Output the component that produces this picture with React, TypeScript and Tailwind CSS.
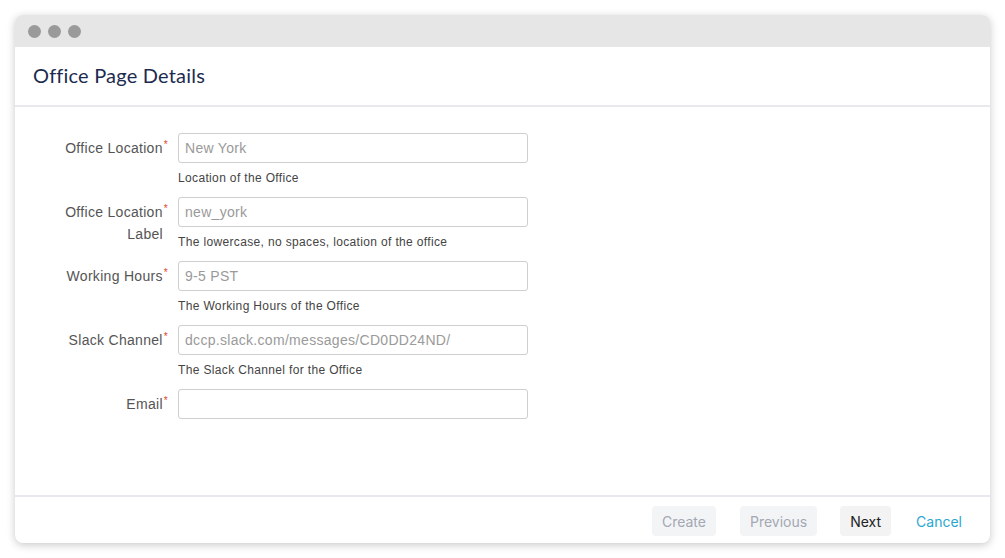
import React from 'react';

type Field = {
  label: string[];
  placeholder: string;
  help?: string;
};

const fields: Field[] = [
  { label: ['Office Location'], placeholder: 'New York', help: 'Location of the Office' },
  { label: ['Office Location', 'Label'], placeholder: 'new_york', help: 'The lowercase, no spaces, location of the office' },
  { label: ['Working Hours'], placeholder: '9-5 PST', help: 'The Working Hours of the Office' },
  { label: ['Slack Channel'], placeholder: 'dccp.slack.com/messages/CD0DD24ND/', help: 'The Slack Channel for the Office' },
  { label: ['Email'], placeholder: '' },
];

function FormRow({ field }: { field: Field }) {
  return (
    <div className="flex h-[64px]">
      <div className="w-[153px] shrink-0 pt-[5px] text-right text-[14px] leading-[20px] tracking-[0.3px] text-[#555]">
        {field.label.map((line, i) => (
          <div key={i} className={i > 0 ? 'pr-[5px]' : ''}>
            {line}
            {i === 0 && <span className="relative -top-[5px] ml-[1px] text-[10px] text-[#e0452b]">*</span>}
          </div>
        ))}
      </div>
      <div className="ml-[10px] flex flex-col">
        <input
          type="text"
          placeholder={field.placeholder}
          className="h-[30px] w-[350px] rounded-[3px] border border-[#cfcfcf] bg-white px-[6px] text-[14px] tracking-[0.3px] text-[#333] placeholder-[#9a9a9a] outline-none"
        />
        {field.help && (
          <span className="mt-[7px] text-[12px] leading-[16px] tracking-[0.35px] text-[#444]">{field.help}</span>
        )}
      </div>
    </div>
  );
}

export default function App() {
  return (
    <div className="h-[558px] w-full bg-white p-[15px] font-['Liberation_Sans',Arial,sans-serif]">
      <div className="flex h-full flex-col overflow-hidden rounded-[8px] bg-white shadow-[0_2px_8px_rgba(0,0,0,0.22)]">
        {/* window chrome */}
        <div className="flex h-[32px] shrink-0 items-center gap-[7px] bg-[#e6e6e6] pl-[13px]">
          <span className="h-[13px] w-[13px] rounded-full bg-[#9a9a9a]" />
          <span className="h-[13px] w-[13px] rounded-full bg-[#9a9a9a]" />
          <span className="h-[13px] w-[13px] rounded-full bg-[#9a9a9a]" />
        </div>

        <div className="flex h-[60px] shrink-0 items-center border-b-2 border-[#e8e8ee] pb-[3px] pl-[18px]">
          <h1 className="font-['Lato',sans-serif] text-[20px] font-normal tracking-[0.2px] text-[#1c2b4f]">Office Page Details</h1>
        </div>

        <div className="flex-1 pt-[26px]">
          {fields.map((f, i) => (
            <FormRow key={i} field={f} />
          ))}
        </div>

        <div className="flex h-[48px] shrink-0 items-center justify-end border-t-2 border-[#e8e8ee] pr-[28px] pt-[2px] font-['Inter',sans-serif] text-[14px]">
          <button className="h-[30px] rounded-[4px] bg-[#f3f4f6] px-[10px] text-[#a3a8b3]">Create</button>
          <button className="ml-[24px] h-[30px] rounded-[4px] bg-[#f3f4f6] px-[10px] text-[#a3a8b3]">Previous</button>
          <button className="ml-[23px] h-[30px] rounded-[4px] bg-[#f3f3f4] px-[10px] text-[#222]">Next</button>
          <button className="ml-[25px] h-[30px] text-[#2aa8d0]">Cancel</button>
        </div>
      </div>
    </div>
  );
}
